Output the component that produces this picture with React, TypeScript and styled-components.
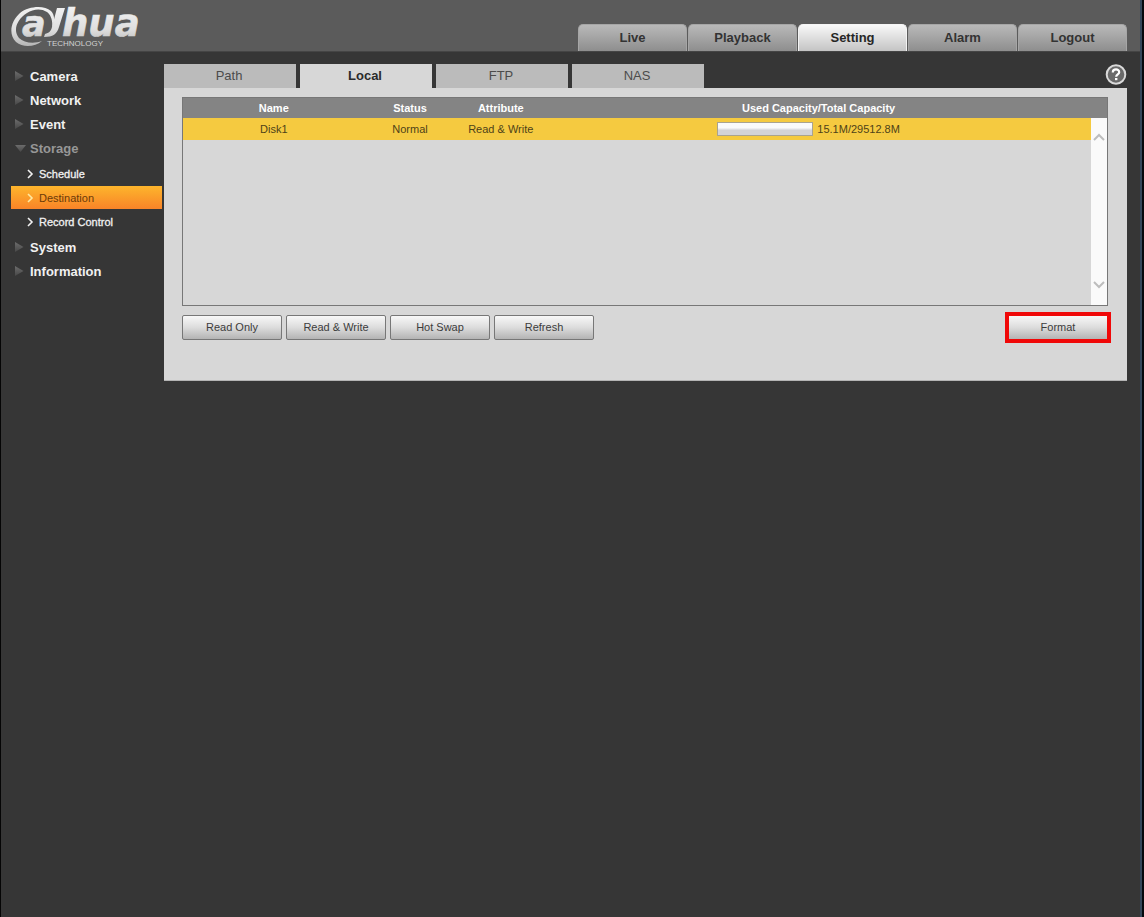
import React, { useState } from "react";
import styled, { createGlobalStyle, css } from "styled-components";

const GlobalStyle = createGlobalStyle`
  *, *::before, *::after { box-sizing: border-box; }
  body {
    margin: 0;
    background: #363636;
    font-family: "Liberation Sans", Arial, Helvetica, sans-serif;
    font-size: 11px;
    color: #3a3a3a;
  }
  button { font-family: inherit; cursor: pointer; }
  a { text-decoration: none; color: inherit; }
  ul { list-style: none; margin: 0; padding: 0; }
`;

const Frame = styled.div`
  min-height: 100vh;
  display: flex;
  border-left: 1px solid #050505;
  border-right: 2px solid #04080d;
`;

const Screen = styled.div`
  flex: 1;
  min-width: 0;
  border-right: 2px solid #34475a;
`;

const Header = styled.header`
  height: 52px;
  display: flex;
  justify-content: space-between;
  align-items: flex-end;
  padding: 0 13px 0 9px;
  background: #5b5b5b;
  border-bottom: 1px solid #454545;
`;

const MainNav = styled.nav`
  display: flex;
  gap: 1px;
`;

const NavButton = styled.button<{ $active: boolean }>`
  width: 109px;
  height: 27px;
  padding: 0 0 2px;
  border: 1px solid #a6a6a6;
  border-bottom: 0;
  border-radius: 5px 5px 0 0;
  font-size: 13px;
  font-weight: bold;
  color: #333;
  background: linear-gradient(#b9b9b9, #8e8e8e);
  ${(p) =>
    p.$active &&
    css`
      border-color: #f4f4f4;
      color: #262626;
      background: linear-gradient(#f8f8f8, #c4c4c4);
    `}
`;

const Body = styled.div`
  display: flex;
  padding: 12px 13px 0 10px;
`;

const Sidebar = styled.nav`
  flex: none;
  width: 153px;
  padding-right: 2px;
`;

const MenuLink = styled.a<{ $open?: boolean }>`
  display: flex;
  align-items: center;
  height: 24px;
  padding-left: 4px;
  gap: 4px;
  font-size: 13px;
  font-weight: bold;
  color: ${(p) => (p.$open ? "#979797" : "#f1f1f1")};
`;

const SubMenu = styled.ul`
  display: flex;
  flex-direction: column;
  gap: 1px;
  padding: 2px 0;
`;

const SubLink = styled.a<{ $active: boolean }>`
  display: flex;
  align-items: center;
  height: 23px;
  padding-left: 15px;
  gap: 5px;
  color: ${(p) => (p.$active ? "#6b3a08" : "#f1f1f1")};
  background: ${(p) => (p.$active ? "linear-gradient(#fdb52c, #f98428)" : "none")};
  -webkit-text-stroke: ${(p) => (p.$active ? "0" : "0.3px #f1f1f1")};
`;

const Main = styled.main`
  flex: 1;
  min-width: 0;
`;

const TabBar = styled.div`
  display: flex;
  gap: 4px;
  height: 24px;
`;

const Tab = styled.button<{ $active: boolean }>`
  width: 132px;
  height: 24px;
  padding: 0 2px 2px 0;
  border: 0;
  font-size: 13px;
  color: ${(p) => (p.$active ? "#2b2b2b" : "#4b4b4b")};
  font-weight: ${(p) => (p.$active ? "bold" : "normal")};
  background: ${(p) => (p.$active ? "#d7d7d7" : "#bbbbbb")};
`;

const HelpButton = styled.button`
  margin-left: auto;
  width: 22px;
  height: 22px;
  padding: 0;
  border: 0;
  background: none;
`;

const Panel = styled.section`
  padding: 9px 19px 40px 18px;
  background: #d7d7d7;
  border-bottom: 1px solid #b4b4b4;
`;

const DiskList = styled.div`
  display: flex;
  height: 209px;
  border: 1px solid #777;
`;

const TableArea = styled.div`
  flex: 1;
  min-width: 0;
`;

const DiskTable = styled.table`
  width: 100%;
  table-layout: fixed;
  border-collapse: collapse;
  text-align: center;
`;

const HeadCell = styled.th<{ $width: string }>`
  width: ${(p) => p.$width};
  height: 20px;
  padding: 0;
  background: #848484;
  color: #fff;
`;

const Cell = styled.td`
  height: 22px;
  padding: 0;
  background: #f5ca40;
  color: #4e4218;
`;

const Capacity = styled.label`
  display: flex;
  justify-content: center;
  align-items: center;
  gap: 4px;
  padding-right: 20px;
`;

const UsageBar = styled.progress`
  appearance: none;
  width: 96px;
  height: 14px;
  border: 1px solid #a9a390;
  background: linear-gradient(#fafafa 40%, #d3d3d8 60%);
  &::-webkit-progress-bar { background: linear-gradient(#fafafa 40%, #d3d3d8 60%); }
  &::-webkit-progress-value { background: #6fa83a; }
`;

const ScrollColumn = styled.div`
  width: 16px;
  display: flex;
  flex-direction: column;
  border-top: 20px solid #848484;
  background: #fafafa;
  justify-content: space-between;
  padding: 11px 0 12px;
`;

const ScrollButton = styled.button`
  display: flex;
  justify-content: center;
  align-items: center;
  height: 16px;
  padding: 0;
  border: 0;
  background: none;
`;

const Actions = styled.div`
  display: flex;
  gap: 4px;
  padding-top: 9px;
`;

const ActionButton = styled.button<{ $marked?: boolean }>`
  width: 100px;
  height: 25px;
  padding: 0 0 1px;
  border: 1px solid #777;
  border-radius: 2px;
  font-size: 11px;
  color: #3c3c3c;
  background: linear-gradient(#f8f8f8, #dcdcdc 50%, #b4b4b4);
  ${(p) =>
    p.$marked &&
    css`
      margin-left: auto;
      border-radius: 0;
      outline: 4px solid #f00808;
      outline-offset: -1px;
    `}
`;

const LogoSvg = styled.svg`
  display: block;
`;

const letter = {
  fontFamily: '"DejaVu Sans", sans-serif',
  fontWeight: 700,
  fontStyle: "oblique",
} as const;

function Logo() {
  return (
    <LogoSvg width="140" height="51" viewBox="10 0 140 51" role="img" aria-label="alhua Technology">
      <defs>
        <linearGradient id="silver" gradientUnits="userSpaceOnUse" x1="0" y1="6" x2="0" y2="46">
          <stop offset="0" stopColor="#f2f2f2" />
          <stop offset="0.6" stopColor="#dedede" />
          <stop offset="1" stopColor="#b5b5b5" />
        </linearGradient>
      </defs>
      <g fill="url(#silver)">
        <path d="M42 41 C35 47 23 48 16 42 C8 34 11 21 20 13 C29 6 44 5 51 11 C55 15 55 22 52 28 C53 21 51 15 47 12 C41 8 33 9 27 13 C16 20 13 31 19 38 C24 43 34 44 42 41 Z" />
        <path d="M57 8 L65 8 L59 27 C57 34 53 37 44 37 L45 34 C49 33 51 31 52 27 Z" />
        <g stroke="url(#silver)" strokeWidth="0.600">
          <text x="22" y="36" fontSize="35" {...letter}>a</text>
          <text x="62" y="36" fontSize="37" {...letter}>hua</text>
        </g>
      </g>
      <text x="47" y="46" fontSize="8" fill="#d2d2d2" fontFamily='"Liberation Sans", Arial, sans-serif'>
        TECHNOLOGY
      </text>
    </LogoSvg>
  );
}

function MenuArrow({ open }: { open: boolean }) {
  return (
    <svg width="11" height="11" viewBox="0 0 11 11" aria-hidden="true">
      <defs>
        <linearGradient id="arrow" x1="0" y1="0" x2="0" y2="1">
          <stop offset="0" stopColor="#6c6c6c" />
          <stop offset="1" stopColor="#484848" />
        </linearGradient>
      </defs>
      <path d={open ? "M0 2 H11 L5.500 9 Z" : "M0 0 L8.500 5 L0 10 Z"} fill="url(#arrow)" />
    </svg>
  );
}

function SubArrow({ active }: { active: boolean }) {
  return (
    <svg width="8" height="10" viewBox="0 0 8 10" aria-hidden="true">
      <path d="M2 1 L6 5 L2 9" fill="none" stroke={active ? "#ffe9a0" : "#f1f1f1"} strokeWidth="1.600" />
    </svg>
  );
}

function ScrollArrow({ up }: { up?: boolean }) {
  return (
    <svg width="12" height="8" viewBox="0 0 12 8" aria-hidden="true">
      <path d={up ? "M1 7 L6 2 L11 7" : "M1 1 L6 6 L11 1"} fill="none" stroke="#bdbdbd" strokeWidth="2" />
    </svg>
  );
}

const sections = ["Live", "Playback", "Setting", "Alarm", "Logout"];
const menu = [
  { name: "Camera" },
  { name: "Network" },
  { name: "Event" },
  { name: "Storage", children: ["Schedule", "Destination", "Record Control"] },
  { name: "System" },
  { name: "Information" },
];
const tabs = ["Path", "Local", "FTP", "NAS"];
const columns = [
  ["Name", "20%"],
  ["Status", "10%"],
  ["Attribute", "10%"],
  ["Used Capacity/Total Capacity", "60%"],
];

export default function App() {
  const [section, setSection] = useState("Setting");
  const [page, setPage] = useState("Destination");
  const [tab, setTab] = useState("Local");

  return (
    <>
      <GlobalStyle />
      <Frame>
        <Screen>
          <Header>
            <Logo />
            <MainNav aria-label="Main">
              {sections.map((s) => (
                <NavButton key={s} $active={s === section} onClick={() => setSection(s)}>
                  {s}
                </NavButton>
              ))}
            </MainNav>
          </Header>
          <Body>
            <Sidebar aria-label="Settings">
              <ul>
                {menu.map((m) => (
                  <li key={m.name}>
                    <MenuLink href="#" $open={!!m.children}>
                      <MenuArrow open={!!m.children} />
                      {m.name}
                    </MenuLink>
                    {m.children && (
                      <SubMenu>
                        {m.children.map((c) => (
                          <li key={c}>
                            <SubLink href="#" $active={c === page} onClick={() => setPage(c)}>
                              <SubArrow active={c === page} />
                              {c}
                            </SubLink>
                          </li>
                        ))}
                      </SubMenu>
                    )}
                  </li>
                ))}
              </ul>
            </Sidebar>
            <Main>
              <TabBar>
                {tabs.map((t) => (
                  <Tab key={t} $active={t === tab} onClick={() => setTab(t)}>
                    {t}
                  </Tab>
                ))}
                <HelpButton aria-label="Help">
                  <svg width="22" height="22" viewBox="0 0 22 22" aria-hidden="true">
                    <circle cx="11" cy="10.500" r="9.300" fill="#6a6a6a" stroke="#dadada" strokeWidth="2" />
                    <path
                      d="M7.800 8.400 C7.800 4.400 14.200 4.400 14.200 8.200 C14.200 10.400 11.200 10.300 11.200 12.800"
                      fill="none"
                      stroke="#fff"
                      strokeWidth="2.200"
                    />
                    <rect x="10" y="14" width="2.400" height="2.200" fill="#fff" />
                  </svg>
                </HelpButton>
              </TabBar>
              <Panel>
                <DiskList>
                  <TableArea>
                    <DiskTable>
                      <thead>
                        <tr>
                          {columns.map(([name, width]) => (
                            <HeadCell key={name} scope="col" $width={width}>
                              {name}
                            </HeadCell>
                          ))}
                        </tr>
                      </thead>
                      <tbody>
                        <tr>
                          <Cell>Disk1</Cell>
                          <Cell>Normal</Cell>
                          <Cell>Read &amp; Write</Cell>
                          <Cell>
                            <Capacity>
                              <UsageBar value={0} max={29512.8} />
                              15.1M/29512.8M
                            </Capacity>
                          </Cell>
                        </tr>
                      </tbody>
                    </DiskTable>
                  </TableArea>
                  <ScrollColumn>
                    <ScrollButton aria-label="Scroll up">
                      <ScrollArrow up />
                    </ScrollButton>
                    <ScrollButton aria-label="Scroll down">
                      <ScrollArrow />
                    </ScrollButton>
                  </ScrollColumn>
                </DiskList>
                <Actions>
                  <ActionButton>Read Only</ActionButton>
                  <ActionButton>Read &amp; Write</ActionButton>
                  <ActionButton>Hot Swap</ActionButton>
                  <ActionButton>Refresh</ActionButton>
                  <ActionButton $marked>Format</ActionButton>
                </Actions>
              </Panel>
            </Main>
          </Body>
        </Screen>
      </Frame>
    </>
  );
}
